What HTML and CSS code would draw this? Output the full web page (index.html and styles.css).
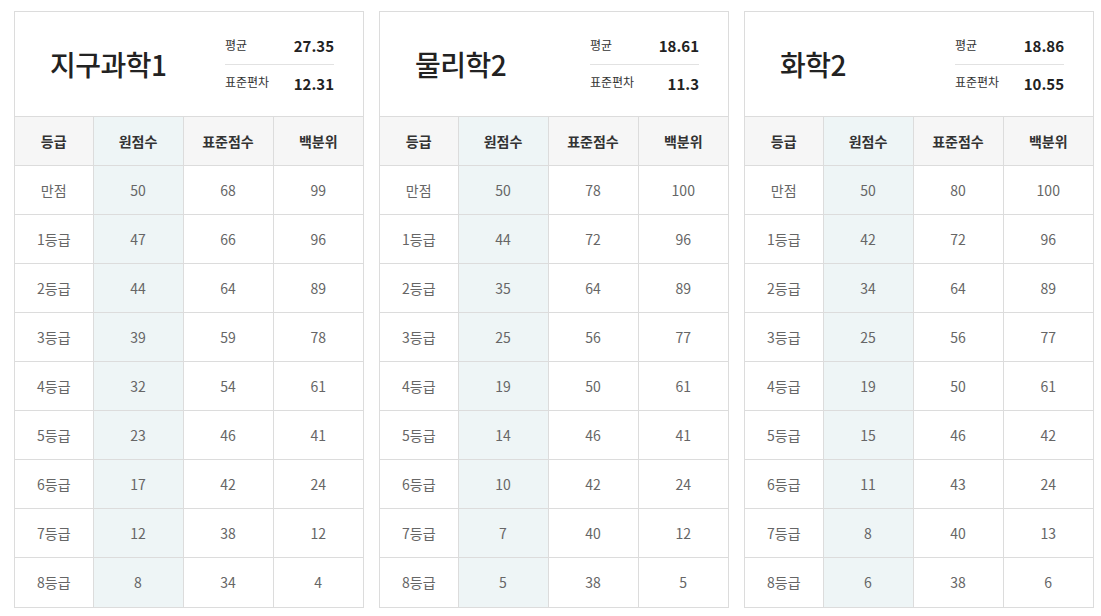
FILE: index.html
```html
<!DOCTYPE html>
<html lang="ko">
<head>
<meta charset="utf-8">
<link rel="stylesheet" href="styles.css">
</head>
<body>
<div class="wrap">
  <section class="card">
    <div class="head">
      <h2 class="title">지구과학1</h2>
      <dl class="stats">
        <div class="stat"><dt>평균</dt><dd>27.35</dd></div>
        <div class="stat"><dt>표준편차</dt><dd>12.31</dd></div>
      </dl>
    </div>
    <table class="grid">
      <thead><tr><th>등급</th><th class="raw">원점수</th><th>표준점수</th><th>백분위</th></tr></thead>
      <tbody>
        <tr><td>만점</td><td class="raw">50</td><td>68</td><td>99</td></tr>
        <tr><td>1등급</td><td class="raw">47</td><td>66</td><td>96</td></tr>
        <tr><td>2등급</td><td class="raw">44</td><td>64</td><td>89</td></tr>
        <tr><td>3등급</td><td class="raw">39</td><td>59</td><td>78</td></tr>
        <tr><td>4등급</td><td class="raw">32</td><td>54</td><td>61</td></tr>
        <tr><td>5등급</td><td class="raw">23</td><td>46</td><td>41</td></tr>
        <tr><td>6등급</td><td class="raw">17</td><td>42</td><td>24</td></tr>
        <tr><td>7등급</td><td class="raw">12</td><td>38</td><td>12</td></tr>
        <tr><td>8등급</td><td class="raw">8</td><td>34</td><td>4</td></tr>
      </tbody>
    </table>
  </section>
  <section class="card">
    <div class="head">
      <h2 class="title">물리학2</h2>
      <dl class="stats">
        <div class="stat"><dt>평균</dt><dd>18.61</dd></div>
        <div class="stat"><dt>표준편차</dt><dd>11.3</dd></div>
      </dl>
    </div>
    <table class="grid">
      <thead><tr><th>등급</th><th class="raw">원점수</th><th>표준점수</th><th>백분위</th></tr></thead>
      <tbody>
        <tr><td>만점</td><td class="raw">50</td><td>78</td><td>100</td></tr>
        <tr><td>1등급</td><td class="raw">44</td><td>72</td><td>96</td></tr>
        <tr><td>2등급</td><td class="raw">35</td><td>64</td><td>89</td></tr>
        <tr><td>3등급</td><td class="raw">25</td><td>56</td><td>77</td></tr>
        <tr><td>4등급</td><td class="raw">19</td><td>50</td><td>61</td></tr>
        <tr><td>5등급</td><td class="raw">14</td><td>46</td><td>41</td></tr>
        <tr><td>6등급</td><td class="raw">10</td><td>42</td><td>24</td></tr>
        <tr><td>7등급</td><td class="raw">7</td><td>40</td><td>12</td></tr>
        <tr><td>8등급</td><td class="raw">5</td><td>38</td><td>5</td></tr>
      </tbody>
    </table>
  </section>
  <section class="card">
    <div class="head">
      <h2 class="title">화학2</h2>
      <dl class="stats">
        <div class="stat"><dt>평균</dt><dd>18.86</dd></div>
        <div class="stat"><dt>표준편차</dt><dd>10.55</dd></div>
      </dl>
    </div>
    <table class="grid">
      <thead><tr><th>등급</th><th class="raw">원점수</th><th>표준점수</th><th>백분위</th></tr></thead>
      <tbody>
        <tr><td>만점</td><td class="raw">50</td><td>80</td><td>100</td></tr>
        <tr><td>1등급</td><td class="raw">42</td><td>72</td><td>96</td></tr>
        <tr><td>2등급</td><td class="raw">34</td><td>64</td><td>89</td></tr>
        <tr><td>3등급</td><td class="raw">25</td><td>56</td><td>77</td></tr>
        <tr><td>4등급</td><td class="raw">19</td><td>50</td><td>61</td></tr>
        <tr><td>5등급</td><td class="raw">15</td><td>46</td><td>42</td></tr>
        <tr><td>6등급</td><td class="raw">11</td><td>43</td><td>24</td></tr>
        <tr><td>7등급</td><td class="raw">8</td><td>40</td><td>13</td></tr>
        <tr><td>8등급</td><td class="raw">6</td><td>38</td><td>6</td></tr>
      </tbody>
    </table>
  </section>
</div>
</body>
</html>
```

FILE: styles.css
```css
* { box-sizing: border-box; }
html, body { margin: 0; padding: 0; background: #fff; }
body {
  font-family: "Noto Sans CJK KR", "Noto Sans", sans-serif;
  color: #333;
}
.wrap {
  display: flex;
  gap: 15px;
  padding: 11px 0 0 14px;
}
.card {
  width: 350px;
  border: 1px solid #dcdcdc;
  background: #fff;
}
.head {
  height: 104px;
  display: flex;
  align-items: center;
  justify-content: space-between;
  padding: 0 29px 0 35px;
}
.title {
  margin: 0;
  font-size: 28px;
  font-weight: 500;
  color: #222;
  letter-spacing: -0.5px;
}
.stats {
  margin: 0;
  width: 109px;
  display: flex;
  flex-direction: column;
}
.stat {
  display: flex;
  justify-content: space-between;
  align-items: center;
  height: 37px;
}
.stat + .stat { border-top: 1px solid #e2e2e2; }
.stat dt {
  font-size: 12px;
  color: #333;
  margin-top: -3px;
}
.stat dd {
  margin: 0;
  font-size: 15px;
  font-weight: 700;
  color: #222;
}
.grid {
  width: 100%;
  border-collapse: collapse;
  table-layout: fixed;
}
.grid th, .grid td {
  height: 49px;
  padding: 0;
  text-align: center;
  border-top: 1px solid #dcdcdc;
  border-left: 1px solid #dcdcdc;
  font-size: 14px;
}
.grid th:first-child, .grid td:first-child { border-left: none; width: 78px; }
.grid th {
  background: #f6f6f6;
  font-weight: 700;
  color: #333;
}
.grid td { color: #666; }
.grid .raw { background: #eef5f6; }
.grid th.raw { background: #eef5f6; }
```
